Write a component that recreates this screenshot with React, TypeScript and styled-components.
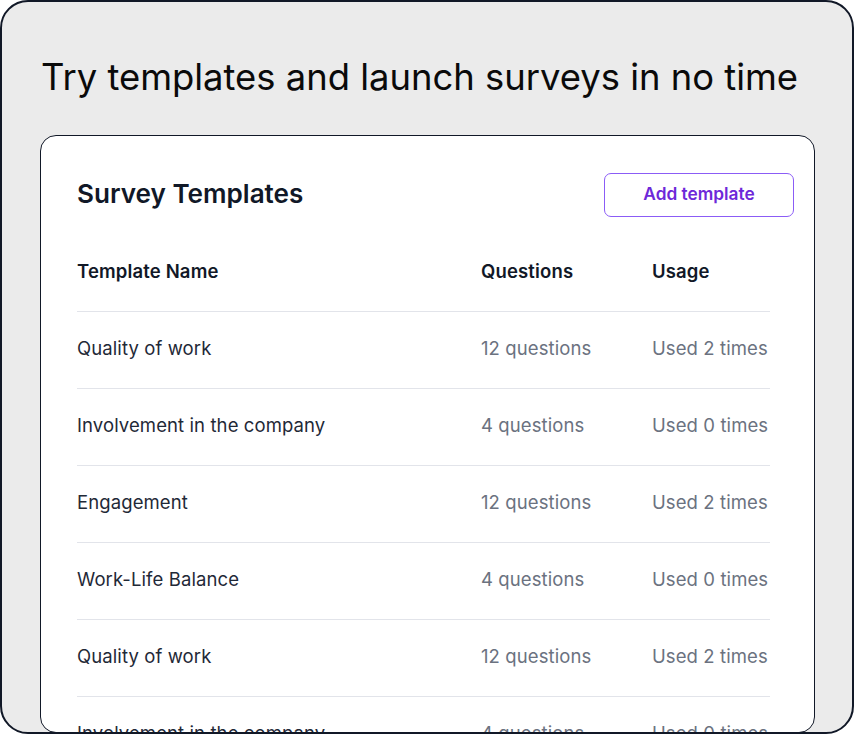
import React from "react";
import styled, { createGlobalStyle } from "styled-components";

const GlobalStyle = createGlobalStyle`
  html, body {
    margin: 0;
    padding: 0;
    background: #ffffff;
  }
  body {
    font-family: Inter, "Noto Sans", sans-serif;
  }
`;

const Frame = styled.div`
  width: 854px;
  height: 734px;
  box-sizing: border-box;
  border: 2px solid #111827;
  border-radius: 28px;
  background: #ebebeb;
  overflow: hidden;
  display: flex;
  flex-direction: column;
  padding: 0 37px 0 38px;
`;

const Headline = styled.h1`
  margin: 51px 0 0 1px;
  font-size: 36.4px;
  font-weight: 400;
  color: #0a0a0a;
  line-height: 48px;
  white-space: nowrap;
`;

const Card = styled.section`
  flex: 1;
  margin-top: 34px;
  margin-bottom: -1px;
  background: #ffffff;
  border: 1.5px solid #111827;
  border-radius: 16px;
  padding: 0 20px 0 36px;
  overflow: hidden;
`;

const CardHeader = styled.div`
  display: flex;
  align-items: center;
  justify-content: space-between;
  height: 118px;
`;

const CardTitle = styled.h2`
  margin: 0 0 3px;
  font-size: 26.1px;
  font-weight: 600;
  color: #111827;
`;

const OutlineButton = styled.button`
  width: 190px;
  height: 44px;
  padding: 0 0 3px;
  border: 1.5px solid #8b5cf6;
  border-radius: 7px;
  background: #ffffff;
  color: #6d28d9;
  font-family: Inter, "Noto Sans", sans-serif;
  font-size: 17.3px;
  font-weight: 600;
  cursor: pointer;
`;

const Table = styled.div`
  width: 693px;
`;

const Row = styled.div<{ $head?: boolean }>`
  display: grid;
  grid-template-columns: 404px 171px 1fr;
  align-items: ${(p) => (p.$head ? "start" : "center")};
  height: ${(p) => (p.$head ? "57px" : "76px")};
  line-height: ${(p) => (p.$head ? "34px" : "32px")};
  border-bottom: 1px solid #e2e4ea;
`;

const HeadCell = styled.div`
  font-size: 18.5px;
  font-weight: 600;
  color: #111827;
  letter-spacing: 0.15px;
`;

const Cell = styled.div<{ $muted?: boolean }>`
  font-size: 18.5px;
  font-weight: 400;
  color: ${(p) => (p.$muted ? "#6b7280" : "#1f2937")};
  letter-spacing: 0.1px;
  margin-bottom: 4px;
`;

const templates = [
  { name: "Quality of work", questions: 12, used: 2 },
  { name: "Involvement in the company", questions: 4, used: 0 },
  { name: "Engagement", questions: 12, used: 2 },
  { name: "Work-Life Balance", questions: 4, used: 0 },
  { name: "Quality of work", questions: 12, used: 2 },
  { name: "Involvement in the company", questions: 4, used: 0 },
];

export default function App() {
  return (
    <>
      <GlobalStyle />
      <Frame>
        <Headline>Try templates and launch surveys in no time</Headline>
        <Card>
          <CardHeader>
            <CardTitle>Survey Templates</CardTitle>
            <OutlineButton>Add template</OutlineButton>
          </CardHeader>
          <Table>
            <Row $head>
              <HeadCell>Template Name</HeadCell>
              <HeadCell>Questions</HeadCell>
              <HeadCell>Usage</HeadCell>
            </Row>
            {templates.map((t, i) => (
              <Row key={i}>
                <Cell>{t.name}</Cell>
                <Cell $muted>{t.questions} questions</Cell>
                <Cell $muted>Used {t.used} times</Cell>
              </Row>
            ))}
          </Table>
        </Card>
      </Frame>
    </>
  );
}
